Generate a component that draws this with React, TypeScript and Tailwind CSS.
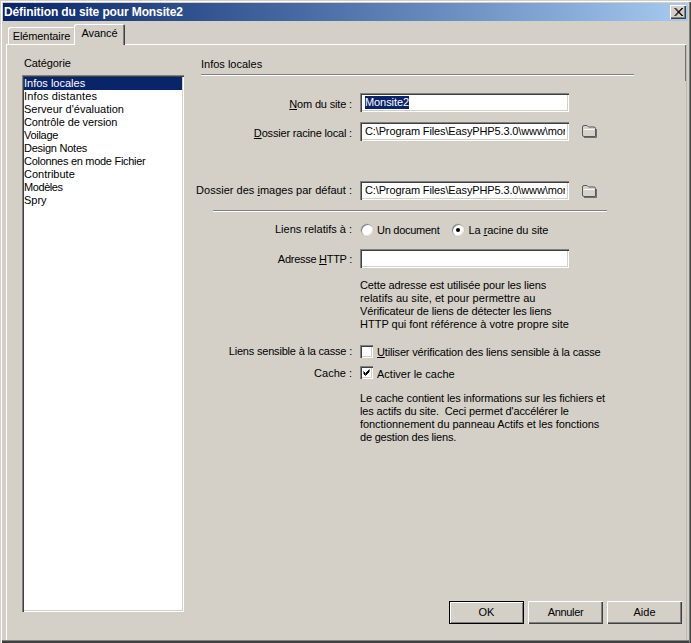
import React from "react";

const sunken = "bg-white shadow-[inset_1px_1px_0_#808080,inset_2px_2px_0_#404040,inset_-1px_-1px_0_#ffffff,inset_-2px_-2px_0_#d4d0c8]";

function U({ children }: { children: React.ReactNode }) {
  return <span className="underline underline-offset-1">{children}</span>;
}

function Folder() {
  return (
    <svg width="16" height="14" viewBox="0 0 16 14" className="ml-[12px]">
      <path d="M1.5 3 Q1.5 1.5 3 1.5 L6 1.5 L7.5 3 L13 3 Q14.5 3 14.5 4.5 L14.5 12.5 L3 12.5 Q1.5 12.5 1.5 11 Z" fill="#d4d2cb" stroke="#5a5954" strokeWidth="1" />
      <path d="M2.5 5.5 L13.5 5.5" stroke="#f7f7f4" strokeWidth="1" />
      <path d="M3 13.5 L15.5 13.5 L15.5 5" stroke="#6e6d66" strokeWidth="1" fill="none" />
    </svg>
  );
}

function Row({ label, className, labelClass = "", children }: { label: React.ReactNode; className: string; labelClass?: string; children: React.ReactNode }) {
  return (
    <div className={`flex items-center ${className}`}>
      <div className={`w-[151px] shrink-0 flex justify-end whitespace-nowrap ${labelClass}`}><span className="shrink-0">{label}</span></div>
      <div className="ml-[8px] flex items-center">{children}</div>
    </div>
  );
}

function Field({ value, selected }: { value?: string; selected?: boolean }) {
  return (
    <div className={`w-[209px] h-[19px] ${sunken} flex items-center pl-[5px] pr-[4px]`}>
      <div className="w-full overflow-hidden whitespace-nowrap tracking-[-0.13px]">
        {selected ? <span className="bg-[#0a246a] text-white leading-[13px] block w-fit tracking-[-0.08px]">{value}</span> : value}
      </div>
    </div>
  );
}

function Radio({ checked }: { checked?: boolean }) {
  return (
    <span className="w-[12px] h-[12px] rounded-full bg-white shadow-[inset_1px_1px_0_#808080,inset_-1px_-1px_0_#e8e6e0,0_0_0_0.5px_#c0bdb5] flex items-center justify-center">
      {checked && <span className="w-[4px] h-[4px] rounded-full bg-black" />}
    </span>
  );
}

function Check({ checked }: { checked?: boolean }) {
  return (
    <span className="w-[13px] h-[13px] bg-white shadow-[inset_1px_1px_0_#808080,inset_2px_2px_0_#404040,inset_-1px_-1px_0_#ffffff,inset_-2px_-2px_0_#d4d0c8] flex items-center justify-center">
      {checked && (
        <svg width="9" height="9" viewBox="0 0 9 9">
          <path d="M1.5 3.5 L3.5 5.5 L7.5 1.5 M1.5 4.5 L3.5 6.5 L7.5 2.5 M1.5 5.5 L3.5 7.5 L7.5 3.5" stroke="#000" strokeWidth="1" fill="none" />
        </svg>
      )}
    </span>
  );
}

function Btn({ children, def, text = "" }: { children: React.ReactNode; def?: boolean; text?: string }) {
  return (
    <button className={`w-[75px] h-[23px] flex items-center justify-center bg-[#d4d0c8] ${text} ${def ? "shadow-[inset_0_0_0_1px_#000000,inset_2px_2px_0_#ffffff,inset_-2px_-2px_0_#808080]" : "shadow-[inset_1px_1px_0_#ffffff,inset_-1px_-1px_0_#404040,inset_-2px_-2px_0_#808080]"}`}>
      {children}
    </button>
  );
}

const cats: [string, string][] = [
  ["Infos locales", ""],
  ["Infos distantes", "tracking-[0.14px]"],
  ["Serveur d'évaluation", ""],
  ["Contrôle de version", "tracking-[-0.11px]"],
  ["Voilage", "tracking-[-0.28px]"],
  ["Design Notes", "tracking-[-0.25px]"],
  ["Colonnes en mode Fichier", "tracking-[-0.29px]"],
  ["Contribute", ""],
  ["Modèles", "tracking-[-0.42px]"],
  ["Spry", ""],
];

export default function App() {
  return (
    <div className="w-[691px] h-[643px] bg-[#d4d0c8] text-black text-[11px] leading-[13px] font-['Liberation_Sans',sans-serif] p-[3px] flex flex-col overflow-hidden shadow-[inset_1px_1px_0_#d4d0c8,inset_2px_2px_0_#ffffff,inset_-1px_0_0_#404040,inset_-2px_0_0_#808080,inset_0_-2px_0_#404040,inset_0_-3px_0_#808080]">
      <div className="h-[18px] shrink-0 flex items-center justify-between pl-[1px] pr-[2px] bg-gradient-to-r from-[#0a246a] to-[#a6caf0] text-white font-bold text-[12px]">
        <span className="tracking-[-0.12px]">Définition du site pour Monsite2</span>
        <span className="w-[16px] h-[14px] bg-[#d4d0c8] flex items-center justify-center shadow-[inset_1px_1px_0_#ffffff,inset_-1px_-1px_0_#404040,inset_-2px_-2px_0_#808080]">
          <svg width="9" height="8" viewBox="0 0 9 8"><path d="M0.5 0 L8 8 M1.5 0 L9 8 M8 0 L0.5 8 M9 0 L1.5 8" stroke="#000" strokeWidth="0.9" /></svg>
        </span>
      </div>

      <div className="flex items-end h-[23px] pl-[5px] shrink-0">
        <div className="w-[67px] h-[17px] pt-[1px] flex items-center justify-center rounded-t-[2px] tracking-[-0.1px] shadow-[inset_1px_1px_0_#ffffff,inset_-1px_0_0_#808080]">Elémentaire</div>
        <div className="relative z-10 w-[51px] h-[21px] -ml-[1px] -mb-[1px] pb-[3px] bg-[#d4d0c8] flex items-center justify-center rounded-t-[2px] tracking-[-0.1px] shadow-[inset_1px_1px_0_#ffffff,inset_-1px_0_0_#404040,inset_-2px_0_0_#808080]">Avancé</div>
      </div>

      <div className="flex-1 min-h-0 ml-[3px] mr-[1px] border-t border-l border-t-white border-l-white border-r border-r-[#bdbab2] bg-[linear-gradient(#707070,#707070)] bg-no-repeat bg-[length:1px_36px] bg-right-top flex flex-col">
        <div className="flex flex-1 min-h-0">
          <div className="w-[162px] ml-[15px] mt-[12px] flex flex-col shrink-0">
            <div className="pl-[2px] h-[18px] tracking-[-0.1px]">Catégorie</div>
            <div className={`h-[537px] p-[2px] ${sunken}`}>
              {cats.map(([c, t], i) => (
                <div key={c} className={`h-[13px] flex items-center ${i === 0 ? "bg-[#0a246a] text-white" : ""} ${t}`}>{c}</div>
              ))}
            </div>
          </div>
          <div className="ml-[17px] w-[433px] flex flex-col">
            <div className="mt-[12px] h-[18px] pt-[1px] border-b border-b-[#808080] shadow-[0_1px_0_#ffffff]"><span>Infos locales</span></div>
            <div className="h-[18px] shrink-0" />
            <Row label={<><U>N</U>om du site :</>} className="h-[19px]" labelClass="pt-[4px] tracking-[-0.16px]"><Field value="Monsite2" selected /></Row>
            <Row label={<><U>D</U>ossier racine local :</>} className="h-[20px] mt-[9px]" labelClass="pt-[4px] tracking-[-0.18px]"><Field value="C:\Program Files\EasyPHP5.3.0\www\mon" /><Folder /></Row>
            <Row label={<>Dossier des <U>i</U>mages par défaut :</>} className="h-[19px] mt-[40px]" labelClass="tracking-[0.02px]"><Field value="C:\Program Files\EasyPHP5.3.0\www\mon" /><Folder /></Row>
            <div className="ml-[12px] w-[394px] mt-[10px] h-[2px] bg-[#808080] border-b border-b-white" />
            <Row label="Liens relatifs à :" className="h-[13px] mt-[11px]">
              <div className="flex items-center gap-[4px] ml-[1px]"><Radio /><span className="pt-[1px] tracking-[-0.27px]">Un document</span></div>
              <div className="flex items-center gap-[4px] ml-[13px]"><Radio checked /><span className="pt-[1px] tracking-[-0.05px]">La <U>r</U>acine du site</span></div>
            </Row>
            <Row label={<>Adresse <U>H</U>TTP :</>} className="h-[20px] mt-[12px]" labelClass="pt-[2px] tracking-[-0.28px]"><Field /></Row>
            <div className="ml-[159px] mt-[11px] whitespace-nowrap">
              <div className="tracking-[-0.13px]">Cette adresse est utilisée pour les liens</div>
              <div className="tracking-[0.05px]">relatifs au site, et pour permettre au</div>
              <div className="tracking-[-0.14px]">Vérificateur de liens de détecter les liens</div>
              <div>HTTP qui font référence à votre propre site</div>
            </div>
            <Row label="Liens sensible à la casse :" className="h-[13px] mt-[14px]" labelClass="tracking-[-0.19px]">
              <Check /><span className="ml-[4px] pt-[2px] tracking-[-0.16px]"><U>U</U>tiliser vérification des liens sensible à la casse</span>
            </Row>
            <Row label="Cache :" className="h-[13px] mt-[8px]" labelClass="pt-[2px]">
              <Check checked /><span className="ml-[4px] pt-[4px]">Activer le cache</span>
            </Row>
            <div className="ml-[159px] mt-[13px] whitespace-nowrap">
              <div className="tracking-[-0.13px]">Le cache contient les informations sur les fichiers et</div>
              <div className="tracking-[-0.13px]">les actifs du site.&nbsp; Ceci permet d'accélérer le</div>
              <div className="tracking-[-0.06px]">fonctionnement du panneau Actifs et les fonctions</div>
              <div className="tracking-[-0.2px]">de gestion des liens.</div>
            </div>
          </div>
        </div>
      </div>
      <div className="h-0 flex justify-end gap-[4px] pr-[6px] -translate-y-[39px]">
        <Btn def>OK</Btn><Btn text="tracking-[-0.35px]">Annuler</Btn><Btn>Aide</Btn>
      </div>
    </div>
  );
}
